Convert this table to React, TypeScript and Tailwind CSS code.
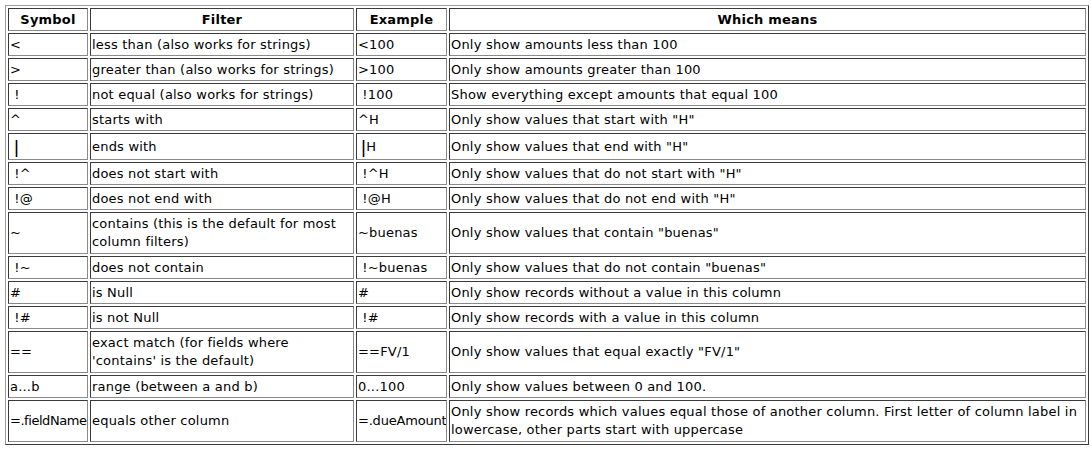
const rows: { sym: string; filter: string; ex: string; means: string; h: string; pipe?: boolean; tight?: boolean }[] = [
  { sym: "<", filter: "less than (also works for strings)", ex: "<100", means: "Only show amounts less than 100", h: "h-[23px]" },
  { sym: ">", filter: "greater than (also works for strings)", ex: ">100", means: "Only show amounts greater than 100", h: "h-[23px]" },
  { sym: "\u00a0!", filter: "not equal (also works for strings)", ex: "\u00a0!100", means: "Show everything except amounts that equal 100", h: "h-[23px]" },
  { sym: "^", filter: "starts with", ex: "^H", means: 'Only show values that start with "H"', h: "h-[23px]" },
  { sym: "", filter: "ends with", ex: "H", means: 'Only show values that end with "H"', h: "h-[27px]", pipe: true },
  { sym: "\u00a0!^", filter: "does not start with", ex: "\u00a0!^H", means: 'Only show values that do not start with "H"', h: "h-[23px]" },
  { sym: "\u00a0!@", filter: "does not end with", ex: "\u00a0!@H", means: 'Only show values that do not end with "H"', h: "h-[23px]" },
  { sym: "~", filter: "contains (this is the default for most column filters)", ex: "~buenas", means: 'Only show values that contain "buenas"', h: "h-[42px]" },
  { sym: "\u00a0!~", filter: "does not contain", ex: "\u00a0!~buenas", means: 'Only show values that do not contain "buenas"', h: "h-[23px]" },
  { sym: "#", filter: "is Null", ex: "#", means: "Only show records without a value in this column", h: "h-[23px]" },
  { sym: "\u00a0!#", filter: "is not Null", ex: "\u00a0!#", means: "Only show records with a value in this column", h: "h-[23px]" },
  { sym: "==", filter: "exact match (for fields where 'contains' is the default)", ex: "==FV/1", means: 'Only show values that equal exactly "FV/1"', h: "h-[42px]" },
  { sym: "a...b", filter: "range (between a and b)", ex: "0...100", means: "Only show values between 0 and 100.", h: "h-[23px]" },
  { sym: "=.fieldName", filter: "equals other column", ex: "=.dueAmount", means: "Only show records which values equal those of another column. First letter of column label in lowercase, other parts start with uppercase", h: "h-[42px]", tight: true },
];

const cell =
  "border border-t-[#3a3a3a] border-l-[#3a3a3a] border-r-[#8a8a8a] border-b-[#8a8a8a] px-[1px] py-0 align-middle";

const Pipe = () => (
  <span className="font-['Liberation_Sans',sans-serif] text-[19px] leading-[17px] text-black align-[-2px]">|</span>
);

export default function App() {
  return (
    <div className="bg-white min-h-[450px] pt-[5px] pl-[5px] font-['DejaVu_Sans',Verdana,sans-serif] text-[13px] leading-[18px] tracking-[0.2px] text-black">
      <table className="w-[1084px] table-fixed border-separate border-spacing-[2px] border border-t-[#9a9a9a] border-l-[#9a9a9a] border-r-[#3a3a3a] border-b-[#3a3a3a]">
        <thead>
          <tr>
            <th className={`${cell} h-[23px] w-[80px] text-center font-bold`}>Symbol</th>
            <th className={`${cell} w-[264px] text-center font-bold`}>Filter</th>
            <th className={`${cell} w-[91px] text-center font-bold`}>Example</th>
            <th className={`${cell} text-center font-bold`}>Which means</th>
          </tr>
        </thead>
        <tbody>
          {rows.map((r, i) => (
            <tr key={i}>
              <td className={`${cell} ${r.h} whitespace-nowrap overflow-hidden ${r.tight ? "tracking-[-0.45px]" : ""}`}>
                {r.pipe ? (
                  <span className="pl-[4px]">
                    <Pipe />
                  </span>
                ) : (
                  r.sym
                )}
              </td>
              <td className={cell}>{r.filter}</td>
              <td className={`${cell} whitespace-nowrap overflow-hidden ${r.tight ? "tracking-[-0.2px]" : ""}`}>
                {r.pipe ? (
                  <span className="pl-[3px]">
                    <Pipe />
                    {r.ex}
                  </span>
                ) : (
                  r.ex
                )}
              </td>
              <td className={cell}>{r.means}</td>
            </tr>
          ))}
        </tbody>
      </table>
    </div>
  );
}
